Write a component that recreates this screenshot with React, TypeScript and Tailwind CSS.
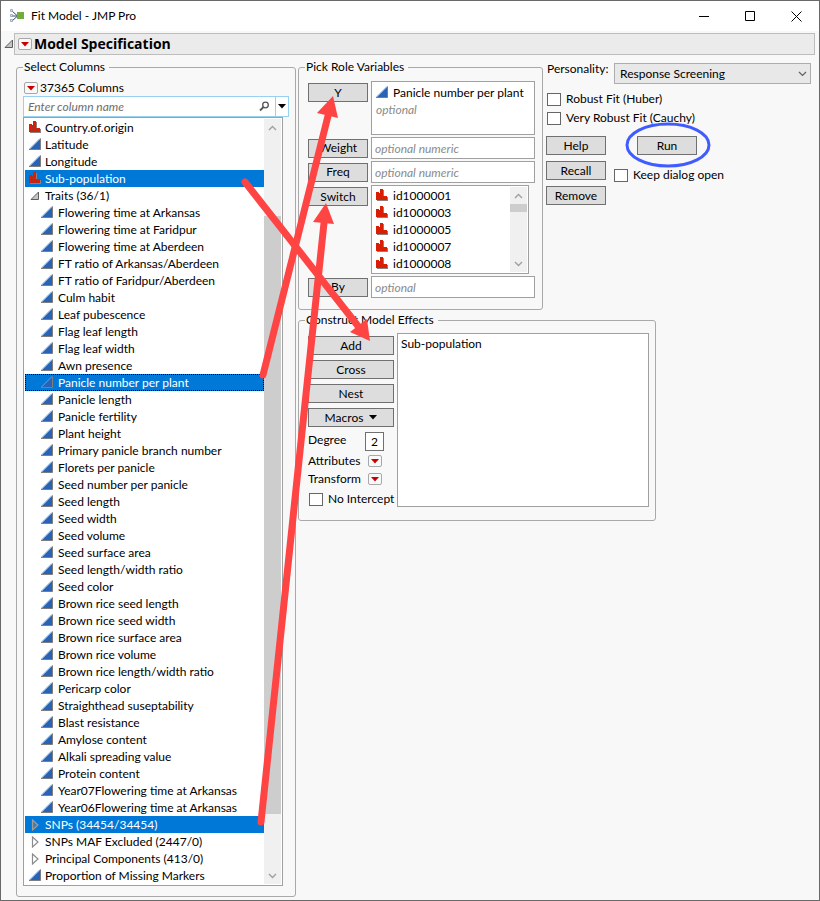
import { useState } from 'react';
import type { ReactNode } from 'react';

type RowKind = 'nominal' | 'continuous' | 'open' | 'closed';

interface Row {
  label: string;
  kind: RowKind;
  nested?: boolean;
  selected?: boolean;
  focused?: boolean;
}

const traits = [
  'Flowering time at Arkansas',
  'Flowering time at Faridpur',
  'Flowering time at Aberdeen',
  'FT ratio of Arkansas/Aberdeen',
  'FT ratio of Faridpur/Aberdeen',
  'Culm habit',
  'Leaf pubescence',
  'Flag leaf length',
  'Flag leaf width',
  'Awn presence',
  'Panicle number per plant',
  'Panicle length',
  'Panicle fertility',
  'Plant height',
  'Primary panicle branch number',
  'Florets per panicle',
  'Seed number per panicle',
  'Seed length',
  'Seed width',
  'Seed volume',
  'Seed surface area',
  'Seed length/width ratio',
  'Seed color',
  'Brown rice seed length',
  'Brown rice seed width',
  'Brown rice surface area',
  'Brown rice volume',
  'Brown rice length/width ratio',
  'Pericarp color',
  'Straighthead suseptability',
  'Blast resistance',
  'Amylose content',
  'Alkali spreading value',
  'Protein content',
  'Year07Flowering time at Arkansas',
  'Year06Flowering time at Arkansas',
];

const rows: Row[] = [
  { label: 'Country.of.origin', kind: 'nominal' },
  { label: 'Latitude', kind: 'continuous' },
  { label: 'Longitude', kind: 'continuous' },
  { label: 'Sub-population', kind: 'nominal', selected: true },
  { label: 'Traits (36/1)', kind: 'open' },
  ...traits.map((label): Row => {
    const active = label === 'Panicle number per plant';
    return { label, kind: 'continuous', nested: true, selected: active, focused: active };
  }),
  { label: 'SNPs (34454/34454)', kind: 'closed', selected: true },
  { label: 'SNPs MAF Excluded (2447/0)', kind: 'closed' },
  { label: 'Principal Components (413/0)', kind: 'closed' },
  { label: 'Proportion of Missing Markers', kind: 'continuous' },
];

const switchColumns = ['id1000001', 'id1000003', 'id1000005', 'id1000007', 'id1000008'];

function NominalIcon() {
  return (
    <svg width="13" height="13" viewBox="0 0 13 13" shapeRendering="crispEdges" className="shrink-0">
      <path d="M1 11h11v1H1zM11 8h1v3h-1zM7 1h1v6H7z" fill="#8f7f7c" />
      <path d="M3 4h1v7H3zM7 7h1v4H7z" fill="#a8321f" />
      <path d="M0 3h3v8H0zM4 0h3v11H4zM8 7h3v4H8z" fill="#d81e05" />
    </svg>
  );
}

function ContinuousIcon() {
  return (
    <svg width="13" height="13" viewBox="0 0 13 13" className="shrink-0">
      <path d="M0.5 11.5L11.5 0.5V11.5z" fill="#2a62b4" />
      <path d="M0.5 11L11 0.5" stroke="#6fa0dc" />
      <path d="M11.5 0.5V11.5H0" fill="none" stroke="#7d7d7d" />
    </svg>
  );
}

function OpenIcon() {
  return (
    <svg width="10" height="10" viewBox="0 0 10 10" className="shrink-0">
      <path d="M1 8.5L8.5 1V8.5z" fill="#c4c4c4" stroke="#5f5f5f" />
    </svg>
  );
}

function ClosedIcon({ filled }: { filled?: boolean }) {
  return (
    <svg width="9" height="12" viewBox="0 0 9 12" className="shrink-0">
      <path d="M1.5 1L7 6L1.5 11z" fill={filled ? '#3d7fb8' : '#ffffff'} stroke={filled ? '#a39c94' : '#8c8c8c'} strokeWidth="1.2" />
    </svg>
  );
}

function RowIcon({ kind, selected }: { kind: RowKind; selected?: boolean }) {
  if (kind === 'nominal') return <NominalIcon />;
  if (kind === 'continuous') return <ContinuousIcon />;
  if (kind === 'open') return <OpenIcon />;
  return <ClosedIcon filled={selected} />;
}

function RedTriangle({ label }: { label: string }) {
  return (
    <button
      type="button"
      aria-label={label}
      className="flex h-3 w-3.5 shrink-0 items-center justify-center rounded-[2px] border border-[#a8a8a8] bg-[#f8f8f8]"
    >
      <svg width="8" height="5" viewBox="0 0 8 5">
        <path d="M0 0h8L4 4.5z" fill="#c80000" />
      </svg>
    </button>
  );
}

function PushButton({ children, wide }: { children: ReactNode; wide?: boolean }) {
  return (
    <button
      type="button"
      className={`${wide ? 'w-[86px]' : 'w-[60px]'} flex h-[19px] shrink-0 items-center justify-center gap-1.5 border border-[#707070] bg-[#dddddd] leading-4`}
    >
      {children}
    </button>
  );
}

function Tick({ label }: { label: string }) {
  return (
    <label className="flex items-center gap-[5px] whitespace-nowrap">
      <input type="checkbox" className="h-[13px] w-3.5 shrink-0 appearance-none border border-[#666666] bg-white checked:bg-[#0078d7]" />
      {label}
    </label>
  );
}

function Panel({ title, className, children }: { title: string; className: string; children: ReactNode }) {
  return (
    <fieldset className={`min-w-0 rounded-[3px] border border-[#a9a9a9] ${className}`}>
      <legend className="pr-1 pl-px leading-4">{title}</legend>
      {children}
    </fieldset>
  );
}

function Chevron({ up }: { up?: boolean }) {
  return (
    <svg width="9" height="6" viewBox="0 0 9 6" className="shrink-0">
      <path d={up ? 'M1 5L4.5 1.5L8 5' : 'M1 1L4.5 4.5L8 1'} fill="none" stroke="#a0a0a0" strokeWidth="1.4" />
    </svg>
  );
}

function RoleField({ role, hint }: { role: string; hint: string }) {
  return (
    <div className="flex items-center gap-[3px]">
      <PushButton>{role}</PushButton>
      <input
        aria-label={role}
        placeholder={hint}
        className="h-[22px] min-w-0 flex-1 border border-[#a0a0a0] bg-white px-[3px] placeholder:text-[#8a8a8a] placeholder:italic"
      />
    </div>
  );
}

function TitleBar() {
  return (
    <header className="flex h-[30px] items-center bg-white pl-[9px]">
      <svg width="15" height="14" viewBox="0 0 15 14">
        <path d="M2 2L7 6.5M2 7H7M2 12L7 7.5" stroke="#3c4a63" fill="none" />
        <path d="M0.5 0.5h2v2h-2zM0.5 5.5h2v2h-2zM0.5 10.5h2v2h-2z" fill="#dfe6f2" stroke="#8c9dbb" strokeWidth="0.8" />
        <path d="M7 3h7v7H7z" fill="#6fae3a" />
      </svg>
      <h1 className="ml-1.5 flex-1">Fit Model - JMP Pro</h1>
      <button type="button" aria-label="Minimize" className="flex h-full w-[46px] items-center justify-center">
        <svg width="11" height="11" viewBox="0 0 11 11">
          <path d="M0 5.5h10" stroke="#000000" />
        </svg>
      </button>
      <button type="button" aria-label="Maximize" className="flex h-full w-[46px] items-center justify-center">
        <svg width="11" height="11" viewBox="0 0 11 11">
          <path d="M0.5 0.5h9v9h-9z" fill="none" stroke="#000000" />
        </svg>
      </button>
      <button type="button" aria-label="Close" className="flex h-full w-[46px] items-center justify-center">
        <svg width="11" height="11" viewBox="0 0 11 11">
          <path d="M0.5 0.5l10 10M10.5 0.5l-10 10" stroke="#000000" />
        </svg>
      </button>
    </header>
  );
}

function SelectColumns() {
  return (
    <Panel title="Select Columns" className="w-[280px] shrink-0 px-1.5 pb-2.5">
      <div className="flex items-center gap-0.5 pt-[5px] pl-px">
        <RedTriangle label="Column options" />
        <span className="leading-4">37365 Columns</span>
      </div>
      <div className="flex h-[21px] border border-[#99d1f0] bg-white">
        <input
          aria-label="Enter column name"
          placeholder="Enter column name"
          className="min-w-0 flex-1 px-1 placeholder:text-[#6d6d6d] placeholder:italic"
        />
        <svg width="20" height="19" viewBox="0 0 20 19" className="shrink-0">
          <circle cx="10.5" cy="8" r="2.8" fill="none" stroke="#555555" strokeWidth="1.3" />
          <path d="M8.5 10L5 13.5" stroke="#555555" strokeWidth="1.8" />
        </svg>
        <button type="button" aria-label="Filter options" className="flex w-[13px] items-center justify-center border-l border-[#99d1f0]">
          <svg width="8" height="5" viewBox="0 0 8 5">
            <path d="M0 0h8L4 4.5z" fill="#000000" />
          </svg>
        </button>
      </div>
      <div className="mr-1.5 flex border border-[#a0a0a0] bg-white p-px">
        <ul role="listbox" aria-label="Columns" className="min-w-0 flex-1">
          {rows.map((row) => (
            <li
              key={row.label}
              role="option"
              aria-selected={!!row.selected}
              className={`flex h-[17px] items-center leading-[17px] whitespace-nowrap ${row.nested ? 'pl-4' : 'pl-[3px]'} ${
                row.selected ? 'bg-[#0078d7] text-white' : ''
              } ${row.focused ? 'outline-1 -outline-offset-1 outline-dotted outline-black' : ''}`}
            >
              <span className={`flex w-[17px] shrink-0 justify-center ${row.nested ? 'pr-1' : 'pr-[3px]'}`}>
                <RowIcon kind={row.kind} selected={row.selected} />
              </span>
              {row.label}
            </li>
          ))}
        </ul>
        <div className="flex w-[17px] shrink-0 flex-col items-center bg-[#f0f0f0]">
          <span className="flex h-[17px] items-center">
            <Chevron up />
          </span>
          <span className="mt-20 w-full flex-1 bg-[#cdcdcd]" />
          <span className="mt-[53px] flex h-[17px] items-center">
            <Chevron />
          </span>
        </div>
      </div>
    </Panel>
  );
}

function RoleVariables() {
  return (
    <Panel title="Pick Role Variables" className="w-[245px] shrink-0 px-1.5 pb-[11px]">
      <div className="flex flex-col gap-0.5 pt-1.5 pr-px pl-[3px]">
        <div className="flex items-start gap-[3px] leading-[17px]">
          <div className="pt-0.5">
            <PushButton>Y</PushButton>
          </div>
          <div className="h-[54px] min-w-0 flex-1 border border-[#a0a0a0] bg-white px-1 pt-0.5">
            <div className="flex items-center gap-1 whitespace-nowrap">
              <ContinuousIcon />
              Panicle number per plant
            </div>
            <div className="text-[#8a8a8a] italic">optional</div>
          </div>
        </div>
        <RoleField role="Weight" hint="optional numeric" />
        <RoleField role="Freq" hint="optional numeric" />
        <div className="flex items-start gap-[3px]">
          <div className="pt-0.5">
            <PushButton>Switch</PushButton>
          </div>
          <div className="mr-1.5 flex min-w-0 flex-1 border border-[#a0a0a0] bg-white p-px">
            <ul role="listbox" aria-label="Switch columns" className="min-w-0 flex-1 pl-[3px]">
              {switchColumns.map((id) => (
                <li key={id} role="option" aria-selected={false} className="flex h-[17px] items-center gap-1 leading-[17px]">
                  <NominalIcon />
                  {id}
                </li>
              ))}
            </ul>
            <div className="flex w-[17px] flex-col items-center bg-[#f0f0f0]">
              <span className="flex h-[17px] items-center">
                <Chevron up />
              </span>
              <span className="h-2 w-full bg-[#cdcdcd]" />
              <span className="mt-auto flex h-[17px] items-center">
                <Chevron />
              </span>
            </div>
          </div>
        </div>
        <RoleField role="By" hint="optional" />
      </div>
    </Panel>
  );
}

function Personality() {
  const [value, setValue] = useState('Response Screening');
  return (
    <div className="min-w-0 flex-1 pt-1 pr-2 pl-[3px]">
      <div className="flex items-start">
        <label htmlFor="personality" className="w-[68px] shrink-0 pl-px leading-3">
          Personality:
        </label>
        <div className="relative flex min-w-0 flex-1 items-center">
          <select
            id="personality"
            value={value}
            onChange={(e) => setValue(e.target.value)}
            className="h-[21px] w-full appearance-none border border-[#adadad] bg-[#e8e8e8] px-[5px]"
          >
            <option>Response Screening</option>
            <option>Standard Least Squares</option>
          </select>
          <span className="pointer-events-none absolute right-1">
            <svg width="9" height="6" viewBox="0 0 9 6">
              <path d="M1 1L4.5 4.5L8 1" fill="none" stroke="#606060" strokeWidth="1.2" />
            </svg>
          </span>
        </div>
      </div>
      <div className="mt-[7px] flex flex-col gap-[3px] pl-px leading-4">
        <Tick label="Robust Fit (Huber)" />
        <Tick label="Very Robust Fit (Cauchy)" />
      </div>
      <div className="mt-2.5 flex gap-2">
        <div className="flex flex-col gap-1.5">
          <PushButton>Help</PushButton>
          <PushButton>Recall</PushButton>
          <PushButton>Remove</PushButton>
        </div>
        <div className="flex flex-col gap-3 leading-4">
          <div className="relative ml-[23px] w-[60px]">
            <PushButton>Run</PushButton>
            <svg width="86" height="46" viewBox="0 0 86 46" className="pointer-events-none absolute -top-3.5 -left-3 max-w-none">
              <ellipse cx="43" cy="23" rx="41" ry="21" fill="none" stroke="#405cff" strokeWidth="3" />
            </svg>
          </div>
          <Tick label="Keep dialog open" />
        </div>
      </div>
    </div>
  );
}

function ModelEffects() {
  return (
    <Panel title="Construct Model Effects" className="w-[358px] px-1.5 pb-[13px]">
      <div className="flex gap-[3px] pt-[5px] pl-[3px]">
        <div className="flex w-[86px] shrink-0 flex-col leading-4">
          <div className="flex flex-col gap-[5px] pt-[3px]">
            <PushButton wide>Add</PushButton>
            <PushButton wide>Cross</PushButton>
            <PushButton wide>Nest</PushButton>
            <PushButton wide>
              Macros
              <svg width="8" height="5" viewBox="0 0 8 5">
                <path d="M0 0h8L4 4.5z" fill="#000000" />
              </svg>
            </PushButton>
          </div>
          <div className="mt-[5px] flex items-start">
            <label htmlFor="degree" className="w-[57px]">
              Degree
            </label>
            <input id="degree" defaultValue="2" className="h-[19px] w-[19px] border border-[#707070] bg-white text-center leading-4" />
          </div>
          <div className="mt-0.5 flex items-center">
            <span className="w-[60px]">Attributes</span>
            <RedTriangle label="Attributes" />
          </div>
          <div className="mt-0.5 flex items-center">
            <span className="w-[60px]">Transform</span>
            <RedTriangle label="Transform" />
          </div>
          <div className="mt-1 pl-px">
            <Tick label="No Intercept" />
          </div>
        </div>
        <ul aria-label="Model effects" className="h-[174px] min-w-0 flex-1 border border-[#a0a0a0] bg-white px-[3px] pt-0.5 leading-4">
          <li>Sub-population</li>
        </ul>
      </div>
    </Panel>
  );
}

// Red arrows link each picked column to the button it was sent to.
function Arrows() {
  return (
    <svg width="820" height="901" viewBox="0 0 820 901" className="pointer-events-none absolute -top-px -left-px max-w-none">
      <g stroke="#ff4444" strokeWidth="7" strokeLinecap="round">
        <path d="M245 182L358 326" />
        <path d="M263 375L328 116" />
        <path d="M261 822L324 223" />
      </g>
      <g fill="#ff4444">
        <path d="M370 341L350 332L367 319z" />
        <path d="M333 96L317 113L338 118z" />
        <path d="M326 203L313 222L334 224z" />
      </g>
    </svg>
  );
}

export default function App() {
  return (
    <div className="relative min-h-screen border border-[#696969] bg-[#f8f8f8] pb-[3px] font-['Lato','Open_Sans',sans-serif] text-[12px] text-black">
      <TitleBar />
      <div className="flex items-center pt-0.5 pr-1 pl-[3px]">
        <OpenIcon />
        <div className="flex h-[22px] min-w-0 flex-1 items-center gap-0.5 border border-[#bdbdbd] bg-[#ebebeb] pl-[3px]">
          <RedTriangle label="Model options" />
          <h2 className="font-['Open_Sans',sans-serif] text-[14px] leading-5 font-bold">Model Specification</h2>
        </div>
      </div>
      <main className="flex items-start gap-0.5 pt-1 pl-[15px]">
        <SelectColumns />
        <div className="flex min-w-0 flex-1 flex-col gap-0.5">
          <div className="flex items-start">
            <RoleVariables />
            <Personality />
          </div>
          <ModelEffects />
        </div>
      </main>
      <Arrows />
    </div>
  );
}
